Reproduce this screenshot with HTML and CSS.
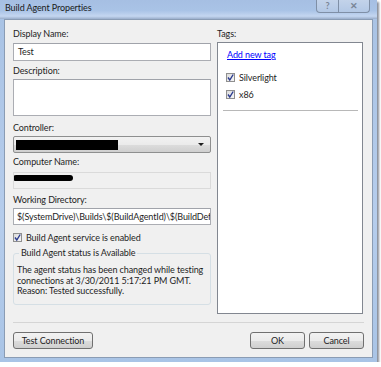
FILE: index.html
```html
<!DOCTYPE html>
<html>
<head>
  <title>Build Agent Properties</title>
  <link rel="stylesheet" href="styles.css">
</head>
<body>
  <div class="window">
    <div class="titlebar">
      <span class="title">Build Agent Properties</span>
      <div class="caption-buttons">
        <span class="cap-btn help">?</span>
        <span class="cap-btn close">&#x2715;</span>
      </div>
    </div>
    <div class="client">
      <div class="main">
        <div class="left">
          <label class="lbl first">Display Name:</label>
          <div class="input name">Test</div>

          <label class="lbl desc-lbl">Description:</label>
          <div class="input textarea"></div>

          <label class="lbl ctrl-lbl">Controller:</label>
          <div class="combo">
            <span class="redact-bar"></span>
            <span class="arrow"></span>
          </div>

          <label class="lbl comp-lbl">Computer Name:</label>
          <div class="input readonly">
            <span class="redact-blob"></span>
          </div>

          <label class="lbl dir-lbl">Working Directory:</label>
          <div class="input dir">$(SystemDrive)\Builds\$(BuildAgentId)\$(BuildDef</div>

          <div class="check-row enabled">
            <span class="checkbox"><svg width="9" height="9" viewBox="0 0 9 9"><path d="M2 4.5 L3.8 7 L7.2 1.5" fill="none" stroke="#2b3b8f" stroke-width="1.4"/></svg></span>
            <span>Build Agent service is enabled</span>
          </div>

          <fieldset class="status">
            <legend>Build Agent status is Available</legend>
            <p>The agent status has been changed while testing<br>connections at 3/30/2011 5:17:21 PM GMT.<br>Reason: Tested successfully.</p>
          </fieldset>
        </div>

        <div class="right">
          <label class="lbl first">Tags:</label>
          <div class="tag-box">
            <a class="add-tag" href="#">Add new tag</a>
            <div class="check-row tag first-tag">
              <span class="checkbox"><svg width="9" height="9" viewBox="0 0 9 9"><path d="M2 4.5 L3.8 7 L7.2 1.5" fill="none" stroke="#2b3b8f" stroke-width="1.4"/></svg></span>
              <span>Silverlight</span>
            </div>
            <div class="check-row tag">
              <span class="checkbox"><svg width="9" height="9" viewBox="0 0 9 9"><path d="M2 4.5 L3.8 7 L7.2 1.5" fill="none" stroke="#2b3b8f" stroke-width="1.4"/></svg></span>
              <span>x86</span>
            </div>
            <div class="tag-sep"></div>
          </div>
        </div>
      </div>

      <div class="separator"></div>

      <div class="footer">
        <button class="btn test">Test Connection</button>
        <div class="spacer"></div>
        <button class="btn ok">OK</button>
        <button class="btn cancel">Cancel</button>
      </div>
    </div>
  </div>
</body>
</html>
```

FILE: styles.css
```css
body {
  margin: 0;
  background: #fff;
  font-family: Lato, 'Liberation Sans', sans-serif;
  font-size: 9px;
  letter-spacing: -0.1px;
  color: #1e1e1e;
}
.window {
  width: 377px;
  height: 362px;
  box-sizing: border-box;
  background: linear-gradient(to bottom, #a8c2e4, #b6cdec 60%, #a9c4e6);
  box-shadow: 2px 2px 2px rgba(40, 50, 70, 0.55);
  display: flex;
  flex-direction: column;
}
.titlebar {
  height: 19px;
  display: flex;
  align-items: flex-start;
  justify-content: space-between;
  background: linear-gradient(to bottom, #a6bfe3 0%, #a9c3e6 55%, #c4d6f0 85%, #9aaecb 100%);
}
.title {
  padding: 2px 0 0 5px;
  line-height: 12px;
  color: #1a1a1a;
}
.caption-buttons {
  display: flex;
  margin-right: 7px;
  border: 1px solid #7f8fa6;
  border-top: none;
  border-radius: 0 0 4px 4px;
  background: linear-gradient(to bottom, #c3d3ea, #b3c8e5);
  overflow: hidden;
}
.cap-btn {
  height: 12px;
  line-height: 12px;
  text-align: center;
  color: #7a8597;
  font-size: 9px;
  font-weight: bold;
}
.help {
  width: 21px;
  border-right: 1px solid #7f8fa6;
}
.close {
  width: 30px;
}
.client {
  flex: 1;
  margin: 0 4px 4px;
  background: #f0f0f0;
  border: 1px solid #8a9cb4;
  padding: 7px 8px 0 8px;
  display: flex;
  flex-direction: column;
}
.main {
  display: flex;
  gap: 6px;
}
.left {
  width: 198px;
  display: flex;
  flex-direction: column;
}
.right {
  width: 146px;
  display: flex;
  flex-direction: column;
}
.lbl {
  display: block;
  height: 14px;
  line-height: 14px;
  white-space: nowrap;
}
.input {
  box-sizing: border-box;
  background: #fff;
  border: 1px solid #abadb3;
  border-top-color: #a0a3aa;
  padding: 0 4px;
  line-height: 15px;
  white-space: nowrap;
  overflow: hidden;
}
.name {
  margin-top: 2px;
  height: 18px;
}
.desc-lbl {
  margin-top: 3px;
}
.textarea {
  margin-top: 1px;
  height: 37px;
}
.ctrl-lbl {
  margin-top: 5px;
}
.combo {
  margin-top: 1px;
  height: 17px;
  box-sizing: border-box;
  border: 1px solid #8e8f8f;
  border-radius: 2px;
  background: linear-gradient(to bottom, #f2f2f2 0%, #ebebeb 50%, #dddddd 51%, #cfcfcf 100%);
  display: flex;
  align-items: center;
  padding: 0 6px 0 2px;
}
.redact-bar {
  width: 102px;
  height: 10px;
  background: #000;
}
.arrow {
  margin-left: auto;
  border-left: 3px solid transparent;
  border-right: 3px solid transparent;
  border-top: 3px solid #1e1e1e;
}
.comp-lbl {
  margin-top: 2px;
}
.readonly {
  margin-top: 3px;
  height: 17px;
  background: #f0f0f0;
  border-color: #dadada;
  padding: 0;
}
.redact-blob {
  display: block;
  width: 60px;
  height: 6px;
  margin: 2px 0 0 -1px;
  background: #000;
  border-radius: 3px;
}
.dir-lbl {
  margin-top: 4px;
}
.dir {
  margin-top: 1px;
  height: 17px;
  line-height: 15px;
  padding: 0 3px;
}
.check-row {
  display: flex;
  align-items: center;
  height: 14px;
  white-space: nowrap;
}
.enabled {
  margin-top: 5px;
}
.checkbox {
  width: 9px;
  height: 9px;
  box-sizing: border-box;
  border: 1px solid #8f8f8f;
  background: linear-gradient(135deg, #dcdcdc, #f6f6f6);
  margin-right: 4px;
  display: flex;
}
.checkbox svg {
  margin: -1px;
}
.status {
  margin: 2px 0 0 0;
  padding: 5px 4px 0 3px;
  height: 59px;
  box-sizing: border-box;
  border: 1px solid #d5dfe5;
  border-radius: 3px;
}
.status legend {
  padding: 0 2px;
  margin-left: 2px;
  line-height: 14px;
}
.status p {
  margin: 0;
  line-height: 10.7px;
  white-space: nowrap;
}
.tag-box {
  margin-top: 1px;
  height: 272px;
  box-sizing: border-box;
  background: #fff;
  border: 1px solid #828790;
  padding: 5px 4px 0 5px;
  display: flex;
  flex-direction: column;
}
.add-tag {
  padding-left: 4px;
  line-height: 14px;
  color: #0000ff;
  text-decoration: underline;
}
.tag {
  padding-left: 3px;
  margin-top: 3px;
}
.first-tag {
  margin-top: 8px;
}
.tag-sep {
  margin-top: 9px;
  border-top: 1px solid #b8b8b8;
}
.separator {
  margin-top: 8px;
  border-top: 1px solid #d5d5d5;
}
.footer {
  display: flex;
  margin-top: 9px;
  gap: 4px;
}
.spacer {
  flex: 1;
}
.btn {
  height: 17px;
  box-sizing: border-box;
  font-family: inherit;
  font-size: 9px;
  letter-spacing: inherit;
  color: #1e1e1e;
  border: 1px solid #707070;
  border-radius: 3px;
  background: linear-gradient(to bottom, #f2f2f2 0%, #ebebeb 50%, #dddddd 51%, #cfcfcf 100%);
  padding: 0;
  line-height: 14px;
}
.test {
  width: 80px;
}
.ok,
.cancel {
  width: 55px;
}
```
